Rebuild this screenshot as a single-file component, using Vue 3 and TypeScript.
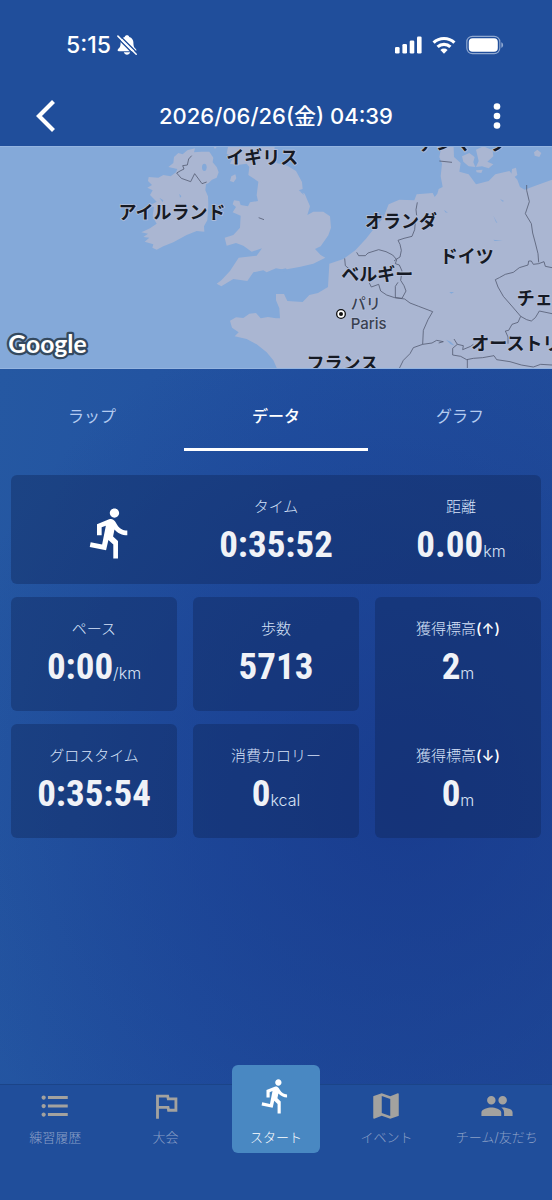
<script setup lang="ts">
import { ref } from 'vue'

interface Tab {
  id: string
  label: string
}

interface NavItem {
  id: string
  label: string
  path: string
}

interface Country {
  name: string
  x: number
  y: number
}

const RUN =
  'M13.49 5.48c1.1 0 2-.9 2-2s-.9-2-2-2-2 .9-2 2 .9 2 2 2zm-3.6 13.9l1-4.4 2.1 2v6h2v-7.5l-2.1-2 .6-3c1.3 1.5 3.3 2.5 5.5 2.5v-2c-1.9 0-3.5-1-4.3-2.4l-1-1.6c-.4-.6-1-1-1.7-1-.3 0-.5.1-.8.1l-5.2 2.2v4.7h2v-3.4l1.8-.7-1.6 8.1-4.9-1-.4 2 7 1.4z'

const tabs: Tab[] = [
  { id: 'lap', label: 'ラップ' },
  { id: 'data', label: 'データ' },
  { id: 'graph', label: 'グラフ' },
]
const activeTab = ref('data')

const navItems: NavItem[] = [
  {
    id: 'history',
    label: '練習履歴',
    path: 'M4 10.5c-.83 0-1.5.67-1.5 1.5s.67 1.5 1.5 1.5 1.5-.67 1.5-1.5-.67-1.5-1.5-1.5zm0-6c-.83 0-1.5.67-1.5 1.5S3.17 7.5 4 7.5 5.5 6.83 5.5 6 4.83 4.5 4 4.5zm0 12c-.83 0-1.5.68-1.5 1.5s.68 1.5 1.5 1.5 1.5-.68 1.5-1.5-.67-1.5-1.5-1.5zM7 19h14v-2H7v2zm0-6h14v-2H7v2zm0-8v2h14V5H7z',
  },
  {
    id: 'race',
    label: '大会',
    path: 'M12.36 6l.4 2H18v6h-3.36l-.4-2H7V6h5.36M14 4H5v17h2v-7h5.6l.4 2h7V6h-5.6L14 4z',
  },
  { id: 'start', label: 'スタート', path: RUN },
  {
    id: 'event',
    label: 'イベント',
    path: 'M20.5 3l-.16.03L15 5.1 9 3 3.36 4.9c-.21.07-.36.25-.36.48V20.5c0 .28.22.5.5.5l.16-.03L9 18.9l6 2.1 5.64-1.9c.21-.07.36-.25.36-.48V3.5c0-.28-.22-.5-.5-.5zM15 19l-6-2.11V5l6 2.11V19z',
  },
  {
    id: 'team',
    label: 'チーム/友だち',
    path: 'M16 11c1.66 0 2.99-1.34 2.99-3S17.66 5 16 5c-1.66 0-3 1.34-3 3s1.34 3 3 3zm-8 0c1.66 0 2.99-1.34 2.99-3S9.66 5 8 5C6.34 5 5 6.34 5 8s1.34 3 3 3zm0 2c-2.33 0-7 1.17-7 3.5V19h14v-2.5c0-2.33-4.67-3.5-7-3.5zm8 0c-.29 0-.62.02-.97.05 1.16.84 1.97 1.97 1.97 3.45V19h6v-2.5c0-2.33-4.67-3.5-7-3.5z',
  },
]

const countries: Country[] = [
  { name: 'イギリス', x: 787, y: 71 },
  { name: 'アイルランド', x: 516, y: 235 },
  { name: 'デンマーク', x: 1388, y: 28 },
  { name: 'オランダ', x: 1203, y: 262 },
  { name: 'ドイツ', x: 1400, y: 368 },
  { name: 'ベルギー', x: 1132, y: 422 },
  { name: 'フランス', x: 1027, y: 690 },
]
</script>

<template>
  <div class="screen">
    <header class="top">
      <div class="status">
        <div class="clock">
          <span>5:15</span>
          <svg class="bell" viewBox="0 0 20 20" aria-hidden="true">
            <path
              d="M10 .3c-1.200 0-2.100.7-2.300 1.600C5 2.700 3.600 5 3.600 7.600c0 4-.8 5-2.600 6.700-.8.8-.4 2 .8 2h16.400c1.200 0 1.600-1.200.8-2-1.800-1.700-2.600-2.700-2.600-6.700 0-2.600-1.400-4.900-4.100-5.700C12.100 1 11.200.3 10 .3zM6.800 17.300c.5 1.500 1.700 2.400 3.200 2.400s2.700-.9 3.200-2.400z"
              fill="#fff"
            />
            <path d="M-.5 2.100L18 20.600M1.900-.3L20.500 18.300" stroke="#204e9b" stroke-width="1.400" />
            <path d="M.9 1.100L19.200 19.300" stroke="#fff" stroke-width="1.500" stroke-linecap="round" />
          </svg>
        </div>
        <div class="signals">
          <svg class="bars" viewBox="0 0 27 18" aria-hidden="true">
            <g fill="#fff">
              <rect x="0" y="11" width="4.600" height="6.500" rx="1.300" />
              <rect x="7.400" y="8" width="4.600" height="9.500" rx="1.300" />
              <rect x="14.700" y="4.500" width="4.600" height="13" rx="1.300" />
              <rect x="22" y="0.500" width="4.600" height="17" rx="1.300" />
            </g>
          </svg>
          <svg class="wifi" viewBox="0 0 24 18" aria-hidden="true">
            <g fill="none" stroke="#fff" stroke-width="3.200">
              <path d="M1.600 6.700a15 15 0 0 1 20.800 0" />
              <path d="M5.600 10.900a9.200 9.200 0 0 1 12.800 0" />
            </g>
            <path d="M12 17.800l-3.600-3.700a5.100 5.100 0 0 1 7.200 0z" fill="#fff" />
          </svg>
          <svg class="battery" viewBox="0 0 38 20" aria-hidden="true">
            <rect x="0.800" y="1.300" width="33" height="17.400" rx="5.600" fill="none" stroke="#8fa8d0" stroke-width="1.200" />
            <rect x="2.800" y="3.300" width="29" height="13.400" rx="3.800" fill="#fff" />
            <path d="M35.300 7.200c2.400.8 2.400 4.800 0 5.600z" fill="#8fa8d0" />
          </svg>
        </div>
      </div>
      <div class="bar">
        <button class="icon-btn" type="button" aria-label="戻る">
          <svg viewBox="0 0 36 36" aria-hidden="true">
            <path d="M16.500 3.500L2 18l14.500 14.500" fill="none" stroke="#fff" stroke-width="4.200" />
          </svg>
        </button>
        <h1>2026/06/26(金) 04:39</h1>
        <button class="icon-btn" type="button" aria-label="メニュー">
          <svg viewBox="0 0 36 36" aria-hidden="true">
            <g fill="#fff">
              <circle cx="18" cy="8.500" r="3.300" />
              <circle cx="18" cy="18" r="3.300" />
              <circle cx="18" cy="27.500" r="3.300" />
            </g>
          </svg>
        </button>
      </div>
    </header>

    <svg class="map" viewBox="0 17 1656 669" preserveAspectRatio="xMidYMid slice" role="img" aria-label="地図">
      <rect y="0" width="1656" height="700" fill="#84a9d9" />
      <g fill="#aab6d2">
        <path
          d="M505 80L520 68 522 50 535 38 548 42 562 30 585 24 582 36 604 34 628 34 640 52 638 66 650 80 656 96 650 112 636 118 626 128 618 132 616 150 624 168 625 195 622 240 612 258 613 274 590 272 560 284 520 306 490 318 470 328 457 322 460 312 434 304 448 292 430 290 444 280 424 276 450 264 470 250 462 236 458 226 462 200 448 196 470 184 450 164 458 150 442 142 456 134 444 122 446 110 475 112 490 104 512 108 528 96 532 86z"
        />
        <path
          d="M688 0L680 40 700 50 690 70 712 74 740 70 748 80 745 104 775 124 770 165 774 182 750 186 744 198 722 194 718 182 702 180 698 192 708 200 698 216 722 226 720 262 700 284 674 292 680 316 708 308 730 316 755 334 786 324 770 346 716 352 690 392 664 420 650 430 664 438 700 416 742 422 760 396 790 390 800 396 828 384 852 388 898 380 940 370 976 352 962 344 945 326 962 318 985 285 993 262 990 228 970 214 940 214 922 224 930 198 914 160 896 150 908 146 906 125 888 92 862 76 830 68 822 40 826 0z"
        />
        <path d="M690 122L694 108 706 102 709 114 701 126zM640 18H652L645 26zM683 38L695 26 703 42 691 50z" />
        <path
          d="M690 541L708 531 730 533 748 520 768 518 782 534 804 530 828 534 840 534 838 504 828 480 828 461 852 461 862 482 908 485 928 464 954 458 984 440 988 370 1030 356 1066 330 1098 295 1124 262 1150 232 1166 192 1198 178 1243 180 1250 162 1298 158 1304 170 1312 160 1316 146 1328 140 1322 108 1326 70 1318 50 1328 0H1360L1362 50 1382 68 1378 94 1406 102 1428 132 1466 122 1486 102 1528 92 1552 118 1560 140 1574 148 1606 136 1656 118V700H838L820 660 800 636 770 612 740 596 704 588 716 576 696 562z"
        />
        <path
          d="M1386 48L1408 38 1424 50 1420 66 1426 80 1406 78 1390 64zM1428 28L1450 18 1478 30 1480 48 1462 64 1480 72 1466 84 1446 78 1428 80 1436 62zM1428 90L1448 88 1444 98 1430 96zM1536 86L1548 82 1552 104 1540 112 1534 104zM1602 36L1612 28 1624 38 1618 50 1604 46z"
        />
      </g>
      <g fill="#84a9d9">
        <ellipse cx="613" cy="81" rx="7" ry="11" />
        <path d="M478 172L490 180 488 186zM538 160L544 168 540 172zM838 388L858 384 862 392 842 394zM898 152L908 156 912 164z" />
        <path d="M1338 598L1352 604 1364 616 1352 612zM1480 298L1508 302 1484 302zM1348 455H1362L1354 460zM1332 208L1344 218 1336 216zM1480 226L1492 248 1488 246zM1500 176L1512 182 1508 184z" />
      </g>
      <g fill="none" stroke="#535b71" stroke-width="2.400" stroke-linejoin="round">
        <path d="M575 46L566 56 562 74 548 76 552 86 540 92 530 98 544 114 572 124 584 100 606 130 620 125M776 232L792 238" />
        <path
          d="M1252 186L1248 208 1250 226 1246 244 1244 268 1236 288 1212 294 1194 300 1200 312 1204 330 1200 350 1190 356 1182 362M1070 336L1076 346 1096 346 1104 338 1136 328 1158 334 1178 344 1190 358 1186 370 1198 374 1206 392 1202 420 1212 436 1218 452 1206 474 1186 472 1186 438 1194 426M1034 354L1036 376 1048 386M1108 428L1114 440 1136 432 1142 452 1160 464 1184 472 1214 476 1230 488 1256 498 1298 514 1284 538 1270 570 1268 612 1240 622 1230 640 1210 660 1198 684M1268 612L1296 608 1310 600 1330 604 1316 608"
        />
        <path
          d="M1580 134L1580 150 1588 184 1576 220 1594 250 1598 278 1606 308 1614 340 1616 366M1616 370L1600 372 1594 362 1586 362 1584 374 1558 382 1540 396 1516 402 1498 412 1486 418 1494 440 1510 468 1538 500 1562 528 1580 538 1594 542 1606 532 1618 512 1656 520M1616 370L1632 364 1636 378 1656 382M1562 528L1554 546 1536 552 1526 570 1516 572 1524 590 1524 610M1362 596L1372 612 1390 616 1388 628 1412 618 1420 612M1372 612L1358 624 1358 644 1382 648 1400 658 1420 654 1448 652 1482 646 1490 658 1530 664 1564 674 1600 680 1622 672 1656 674M1402 658V686M1318 62L1356 66"
        />
      </g>
      <g class="country">
        <text v-for="c in countries" :key="c.name" :x="c.x" :y="c.y">{{ c.name }}</text>
        <text class="from-left" x="1550" y="493">チェコ</text>
        <text class="from-left" x="1414" y="629">オーストリア</text>
      </g>
      <g class="city">
        <text x="1052" y="506">パリ</text>
        <text x="1052" y="566">Paris</text>
      </g>
      <circle cx="1023" cy="521" r="13" fill="#fff" stroke="#111" stroke-width="4" />
      <circle cx="1023" cy="521" r="6" fill="#111" />
      <text class="brand" x="25" y="637">Google</text>
      <path d="M0 18.500h1656M0 684.500h1656" stroke="#94b4e0" stroke-width="3" />
    </svg>

    <main class="content">
      <div class="tabs" role="tablist">
        <button
          v-for="t in tabs"
          :key="t.id"
          type="button"
          role="tab"
          class="tab"
          :class="{ active: t.id === activeTab }"
          :aria-selected="t.id === activeTab"
          @click="activeTab = t.id"
        >
          {{ t.label }}
        </button>
      </div>

      <section class="stats">
        <div class="card summary">
          <svg class="runner" viewBox="0 0 24 24" aria-hidden="true"><path :d="RUN" fill="#fff" /></svg>
          <div class="stat">
            <span class="label">タイム</span>
            <p class="value">0:35:52</p>
          </div>
          <div class="stat">
            <span class="label">距離</span>
            <p class="value">0.00<small>km</small></p>
          </div>
        </div>
        <div class="card stat">
          <span class="label">ペース</span>
          <p class="value">0:00<small>/km</small></p>
        </div>
        <div class="card stat">
          <span class="label">歩数</span>
          <p class="value">5713</p>
        </div>
        <div class="card elevation">
          <div class="stat">
            <span class="label">獲得標高<b>(↑)</b></span>
            <p class="value">2<small>m</small></p>
          </div>
          <div class="stat">
            <span class="label">獲得標高<b>(↓)</b></span>
            <p class="value">0<small>m</small></p>
          </div>
        </div>
        <div class="card stat">
          <span class="label">グロスタイム</span>
          <p class="value">0:35:54</p>
        </div>
        <div class="card stat">
          <span class="label">消費カロリー</span>
          <p class="value">0<small>kcal</small></p>
        </div>
      </section>
    </main>

    <nav class="nav">
      <a v-for="n in navItems" :key="n.id" :href="'#' + n.id" class="nav-item" :class="{ start: n.id === 'start' }">
        <svg viewBox="0 0 24 24" aria-hidden="true"><path :d="n.path" fill="currentColor" /></svg>
        <span>{{ n.label }}</span>
      </a>
    </nav>
  </div>
</template>

<style>
body {
  margin: 0;
  background: #204e9b;
}
</style>

<style scoped>
.screen {
  display: flex;
  flex-direction: column;
  min-height: 100vh;
  font-family: Inter, 'Noto Sans CJK JP', sans-serif;
  color: #fff;
}

.top {
  background: #204e9b;
}

.status {
  display: flex;
  align-items: center;
  justify-content: space-between;
  height: 90px;
  padding: 0 48px 0 66px;
}

.clock {
  display: flex;
  align-items: center;
  gap: 6px;
  font-size: 23px;
  font-weight: 500;
}

.bell {
  width: 20px;
  height: 20px;
}

.signals {
  display: flex;
  align-items: center;
  gap: 10px;
}

.bars {
  width: 27px;
  height: 18px;
}

.wifi {
  width: 24px;
  height: 18px;
}

.battery {
  width: 38px;
  height: 20px;
}

.bar {
  display: flex;
  align-items: center;
  justify-content: space-between;
  padding: 8px 37px 12px;
}

h1 {
  margin: 0;
  font-size: 22px;
  line-height: 28px;
  font-weight: 500;
}

.icon-btn {
  padding: 0;
  border: 0;
  background: none;
  line-height: 0;
}

.icon-btn svg {
  width: 36px;
  height: 36px;
  overflow: visible;
}

.map {
  display: block;
  width: 100%;
  height: auto;
}

.country text {
  fill: #161a24;
  stroke: #b4bfda;
  stroke-width: 5px;
  paint-order: stroke;
  font-size: 54px;
  font-weight: 700;
  text-anchor: middle;
}

.country .from-left {
  text-anchor: start;
}

.city text {
  fill: #394150;
  stroke: #b4bfda;
  stroke-width: 5px;
  paint-order: stroke;
  font-size: 45px;
  font-weight: 500;
}

.brand {
  fill: #fff;
  stroke: #34495f;
  stroke-width: 14px;
  stroke-linejoin: round;
  paint-order: stroke;
  font-family: Lato, sans-serif;
  font-size: 74px;
  font-weight: 700;
}

.content {
  flex: 1;
  background:
    radial-gradient(ellipse 480px 500px at 74% 60%, rgba(23, 56, 139, 0.8) 0%, rgba(23, 56, 139, 0.45) 45%, rgba(23, 56, 139, 0) 100%),
    linear-gradient(100deg, #2558a2 0%, #2150a0 45%, #204b99 100%);
}

.tabs {
  display: grid;
  grid-template-columns: repeat(3, 1fr);
}

.tab {
  height: 82px;
  padding: 12px 0 0;
  border: 0;
  border-bottom: 3px solid transparent;
  background: none;
  color: #b3cbf0;
  font: inherit;
  font-size: 16px;
}

.tab.active {
  border-color: #fff;
  color: #fff;
  font-weight: 500;
}

.stats {
  display: grid;
  grid-template-columns: repeat(3, 1fr);
  grid-auto-rows: 114px;
  grid-template-rows: 109px;
  gap: 13px 16px;
  padding: 24px 11px;
}

.card {
  border-radius: 6px;
  background: rgba(16, 38, 88, 0.4);
}

.summary {
  grid-column: 1 / -1;
  display: grid;
  grid-template-columns: 160fr 210fr 160fr;
}

.runner {
  width: 56px;
  height: 56px;
  align-self: center;
  justify-self: end;
  margin: 6px 32px 0 0;
}

.elevation {
  grid-row: 2 / 4;
  grid-column: 3;
  display: grid;
  grid-template-rows: 1fr 1fr;
  gap: 13px;
}

.stat {
  display: flex;
  flex-direction: column;
  align-items: center;
  padding-top: 20px;
}

.label {
  color: #d6e2f8;
  font-size: 15px;
  line-height: 24px;
  font-weight: 300;
}

.label b {
  color: #fff;
  font-weight: 500;
}

.value {
  margin: 2px 0 0;
  color: #f0f2f7;
  font-family: 'Roboto Condensed', 'Liberation Sans Narrow', Roboto, sans-serif;
  font-size: 37px;
  line-height: 48px;
  font-weight: 700;
}

.value small {
  color: #d8e2f5;
  font-family: Inter, sans-serif;
  font-size: 16px;
  font-weight: 300;
}

.nav {
  display: grid;
  grid-template-columns: repeat(5, 1fr);
  height: 115px;
  border-top: 1px solid #1b4488;
  background: #204e9b;
}

.nav-item {
  display: flex;
  flex-direction: column;
  align-items: center;
  padding-top: 4px;
  color: #a3a29f;
  text-decoration: none;
}

.nav-item svg {
  width: 34px;
  height: 34px;
}

.nav-item span {
  margin-top: 4px;
  color: #8a9fc6;
  font-size: 13px;
  line-height: 20px;
  font-weight: 300;
}

.start {
  box-sizing: border-box;
  justify-self: center;
  width: 88px;
  height: 88px;
  margin-top: -20px;
  padding-top: 12px;
  border-radius: 6px;
  background: #4988c2;
  color: #fff;
}

.start svg {
  width: 38px;
  height: 38px;
}

.start span {
  margin-top: 12px;
  color: #fff;
}
</style>
